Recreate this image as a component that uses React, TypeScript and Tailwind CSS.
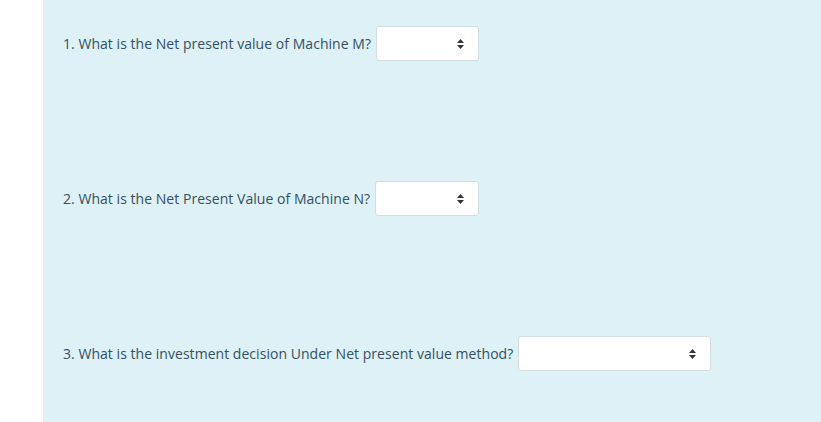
function Arrows() {
  return (
    <svg width="7" height="10" viewBox="0 0 7 10" className="text-[#333]">
      <path d="M3.5 0L7 4H0z" fill="currentColor" />
      <path d="M3.5 10L0 6h7z" fill="currentColor" />
    </svg>
  );
}

function Question({ text, selectW }: { text: string; selectW: string }) {
  return (
    <div className="flex items-center">
      <span className="text-[14px] tracking-[0.04px] text-[#34505f]">{text}</span>
      <div
        className={`ml-[5px] h-[35px] ${selectW} flex items-center justify-end pr-[14px] bg-white border border-[#d3dde2] rounded-[3px]`}
      >
        <Arrows />
      </div>
    </div>
  );
}

export default function App() {
  return (
    <div className="w-[821px] h-[422px] bg-white flex" style={{ fontFamily: '"Open Sans", sans-serif' }}>
      <div className="ml-[43px] flex-1 bg-[#def1f7] pl-[20px] pt-[26px] flex flex-col">
        <Question text="1. What is the Net present value of Machine M?" selectW="w-[103px]" />
        <div className="h-[120px]" />
        <Question text="2. What is the Net Present Value of Machine N?" selectW="w-[104px]" />
        <div className="h-[120px]" />
        <Question text="3. What is the investment decision Under Net present value method?" selectW="w-[193px]" />
      </div>
    </div>
  );
}
